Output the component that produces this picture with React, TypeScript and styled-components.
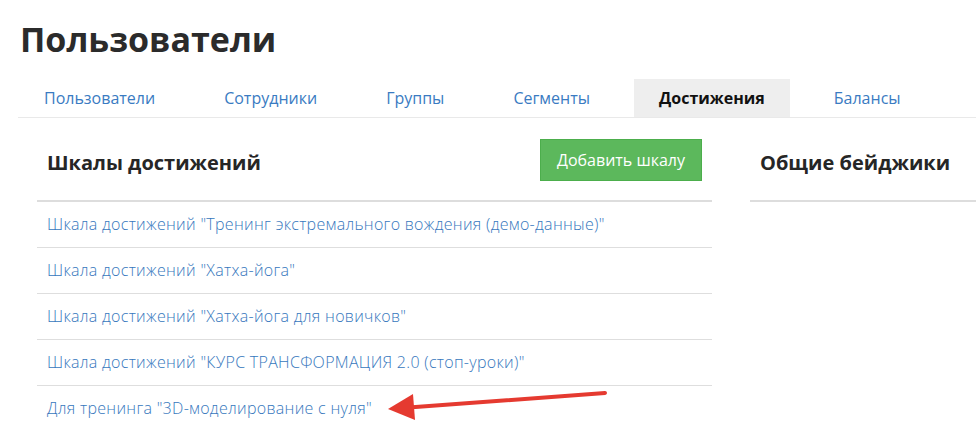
import React from "react";
import styled, { createGlobalStyle } from "styled-components";

const Global = createGlobalStyle`
  html, body { margin: 0; padding: 0; background: #fff; overflow: hidden; }
  body { font-family: "Open Sans", "Liberation Sans", sans-serif; color: #333; }
  * { box-sizing: border-box; }
`;

const Page = styled.div`
  position: relative;
  width: 1300px;
  padding-left: 18px;
`;

const Title = styled.h1`
  margin: 0;
  padding: 18px 0 0 2px;
  font-size: 34px;
  line-height: 42px;
  font-weight: 700;
  color: #2b2b2b;
`;

const Tabs = styled.nav`
  margin-top: 19px;
  display: flex;
  gap: 19px;
  padding-left: 1px;
  border-bottom: 1px solid #e9e9e9;
`;

const Tab = styled.a<{ $active?: boolean }>`
  display: block;
  padding: 9px 25px;
  font-size: 16px;
  line-height: 20px;
  font-weight: ${(p) => (p.$active ? 700 : 400)};
  color: ${(p) => (p.$active ? "#111" : "#3a7bc2")};
  background: ${(p) => (p.$active ? "#eeeeee" : "transparent")};
  text-decoration: none;
  white-space: nowrap;
`;

const Content = styled.div`
  display: flex;
  gap: 38px;
  padding-left: 19px;
`;

const Panel = styled.section<{ $width: number }>`
  width: ${(p) => p.$width}px;
  flex: none;
`;

const PanelHeader = styled.div`
  display: flex;
  align-items: center;
  justify-content: space-between;
  height: 84px;
  padding: 22px 10px 20px 10px;
  border-bottom: 2px solid #dddddd;
`;

const PanelTitle = styled.h3`
  margin: 6px 0 0 0;
  font-size: 20px;
  line-height: 24px;
  font-weight: 700;
  color: #262626;
  white-space: nowrap;
`;

const AddButton = styled.button`
  width: 162px;
  height: 42px;
  background: #5cb85c;
  border: 1px solid #4cae4c;
  border-radius: 0;
  color: #fff;
  font-family: inherit;
  font-size: 16px;
  padding: 0;
`;

const List = styled.ul`
  list-style: none;
  margin: 0;
  padding: 0;
`;

const Row = styled.li`
  padding: 12px 10px;
  line-height: 21px;
  font-size: 16px;
  border-bottom: 1px solid #dedede;
  &:last-child { border-bottom: none; }
`;

const RowLink = styled.a`
  color: #3677bd;
  font-weight: 300;
  letter-spacing: 0.3px;
  text-decoration: none;
  white-space: nowrap;
`;

const Arrow = styled.svg`
  position: absolute;
  left: 0;
  top: 0;
  pointer-events: none;
`;

const tabs = ["Пользователи", "Сотрудники", "Группы", "Сегменты", "Достижения", "Балансы"];
const rows = [
  'Шкала достижений "Тренинг экстремального вождения (демо-данные)"',
  'Шкала достижений "Хатха-йога"',
  'Шкала достижений "Хатха-йога для новичков"',
  'Шкала достижений "КУРС ТРАНСФОРМАЦИЯ 2.0 (стоп-уроки)"',
  'Для тренинга "3D-моделирование с нуля"',
];

export default function App() {
  return (
    <>
      <Global />
      <Page>
        <Title>Пользователи</Title>
        <Tabs>
          {tabs.map((t) => (
            <Tab key={t} $active={t === "Достижения"}>
              {t}
            </Tab>
          ))}
        </Tabs>
        <Content>
          <Panel $width={675}>
            <PanelHeader>
              <PanelTitle>Шкалы достижений</PanelTitle>
              <AddButton>Добавить шкалу</AddButton>
            </PanelHeader>
            <List>
              {rows.map((r) => (
                <Row key={r}>
                  <RowLink>{r}</RowLink>
                </Row>
              ))}
            </List>
          </Panel>
          <Panel $width={420}>
            <PanelHeader>
              <PanelTitle>Общие бейджики</PanelTitle>
            </PanelHeader>
          </Panel>
        </Content>
        <Arrow width="976" height="439" viewBox="0 0 976 439">
          <line x1="605" y1="393" x2="402" y2="408" stroke="#e53a30" strokeWidth="4" strokeLinecap="round" />
          <polygon points="388,409 413,394 415,420" fill="#e53a30" />
        </Arrow>
      </Page>
    </>
  );
}
